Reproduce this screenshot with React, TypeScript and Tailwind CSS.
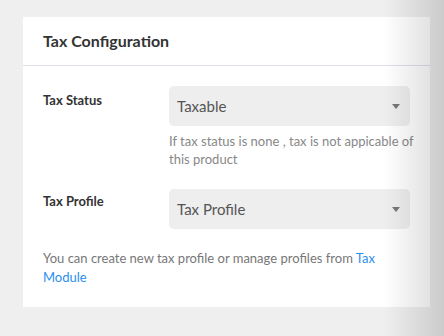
function SelectBox({ value }: { value: string }) {
  return (
    <div className="flex h-10 w-[241px] shrink-0 items-center justify-between rounded-[5px] bg-[#eeeeee] pl-2 pr-[10px]">
      <span className="text-[15px] text-[#555]">{value}</span>
      <span className="h-0 w-0 border-x-[4px] border-t-[5px] border-x-transparent border-t-[#777]" />
    </div>
  );
}

export default function App() {
  return (
    <div
      className="relative h-[336px] w-[444px] overflow-hidden bg-[#efefef] pt-[17px] pl-[23px]"
      style={{ fontFamily: "Lato, 'Noto Sans', sans-serif" }}
    >
      <div className="w-[407px] bg-white">
        <div className="flex h-[49px] items-center border-b border-[#e2dfe9] px-5">
          <h2 className="text-[16px] font-bold text-[#333]">Tax Configuration</h2>
        </div>

        <div className="px-5 pt-5 pb-5">
          <div className="flex">
            <div className="w-[126px] shrink-0 pt-[5px] text-[13px] font-bold text-[#333]">Tax Status</div>
            <div className="w-[241px] shrink-0">
              <SelectBox value="Taxable" />
              <p className="mt-[6px] w-[246px] text-[13px] leading-[18px] text-[#888]">
                If tax status is none , tax is not appicable of this product
              </p>
            </div>
          </div>

          <div className="mt-[21px] flex">
            <div className="w-[126px] shrink-0 pt-[3px] text-[13px] font-bold text-[#333]">Tax Profile</div>
            <SelectBox value="Tax Profile" />
          </div>

          <p className="mt-[20px] text-[13px] leading-[19px] text-[#777]">
            You can create new tax profile or manage profiles from{" "}
            <a className="text-[#2b8ef0]">Tax Module</a>
          </p>
        </div>
      </div>

      <div className="pointer-events-none absolute inset-y-0 right-0 w-[60px] bg-gradient-to-r from-transparent to-black/15" />
    </div>
  );
}
